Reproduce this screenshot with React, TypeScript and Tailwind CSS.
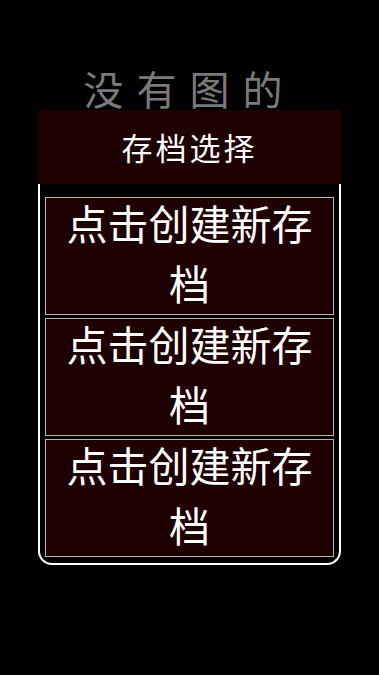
const cjk = { fontFamily: '"Noto Sans CJK SC", "Noto Sans", sans-serif' };

function SaveSlot() {
  return (
    <div className="h-[118px] border border-[#b8b8b8] bg-[#1e0000] px-1 text-white text-center cursor-pointer">
      <p className="relative -top-[6px] text-[41px] leading-[60px]">点击创建新存档</p>
    </div>
  );
}

export default function App() {
  return (
    <div className="min-h-screen bg-black pt-[68px]" style={cjk}>
      <div className="w-[303px] mx-auto">
        <div className="h-[42px] text-[40px] leading-[40px] text-[#7a7a7a] text-center tracking-[13px] whitespace-nowrap">
          没有图的
        </div>
        <div className="relative h-[74px] bg-[#1f0000] flex items-center justify-center text-white text-[31px] tracking-[3px]">
          存档选择
        </div>
        <div className="border-2 border-t-0 border-white rounded-b-[14px] px-[5px] pt-[13px] pb-[6px] flex flex-col gap-[3px]">
          <SaveSlot />
          <SaveSlot />
          <SaveSlot />
        </div>
      </div>
    </div>
  );
}
